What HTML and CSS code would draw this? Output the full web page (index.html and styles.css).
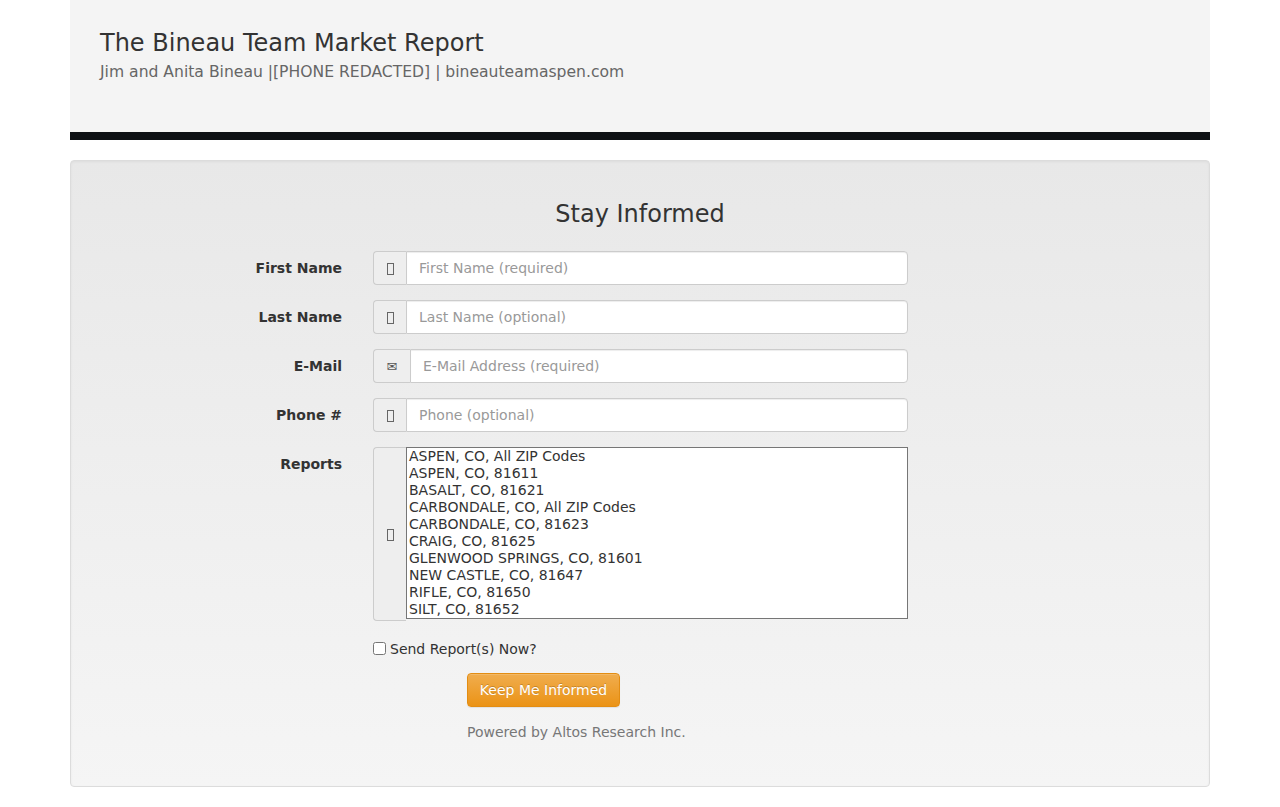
FILE: index.html
```html
<!DOCTYPE html>
<html>
<head>
<meta charset="utf-8">
<title>The Bineau Team Market Report</title>
<link rel="stylesheet" href="styles.css">
</head>
<body>
<div class="container">
  <header class="masthead">
    <h1 class="title">The Bineau Team Market Report</h1>
    <p class="subtitle">Jim and Anita Bineau |[PHONE REDACTED] | bineauteamaspen.com</p>
  </header>
  <div class="bar"></div>
  <div class="well">
    <h3 class="well-title">Stay Informed</h3>
    <form class="form">
      <div class="row">
        <label class="label">First Name</label>
        <div class="group">
          <span class="addon"><span class="tofu"></span></span>
          <input class="input" type="text" placeholder="First Name (required)">
        </div>
      </div>
      <div class="row">
        <label class="label">Last Name</label>
        <div class="group">
          <span class="addon"><span class="tofu"></span></span>
          <input class="input" type="text" placeholder="Last Name (optional)">
        </div>
      </div>
      <div class="row">
        <label class="label">E-Mail</label>
        <div class="group">
          <span class="addon addon-mail">✉</span>
          <input class="input" type="text" placeholder="E-Mail Address (required)">
        </div>
      </div>
      <div class="row">
        <label class="label">Phone #</label>
        <div class="group">
          <span class="addon"><span class="tofu"></span></span>
          <input class="input" type="text" placeholder="Phone (optional)">
        </div>
      </div>
      <div class="row row-top">
        <label class="label">Reports</label>
        <div class="group group-select">
          <span class="addon addon-tall"><span class="tofu"></span></span>
          <select class="select" multiple size="10">
            <option>ASPEN, CO, All ZIP Codes</option>
            <option>ASPEN, CO, 81611</option>
            <option>BASALT, CO, 81621</option>
            <option>CARBONDALE, CO, All ZIP Codes</option>
            <option>CARBONDALE, CO, 81623</option>
            <option>CRAIG, CO, 81625</option>
            <option>GLENWOOD SPRINGS, CO, 81601</option>
            <option>NEW CASTLE, CO, 81647</option>
            <option>RIFLE, CO, 81650</option>
            <option>SILT, CO, 81652</option>
          </select>
        </div>
      </div>
      <div class="check-row">
        <label class="check"><input type="checkbox" class="checkbox"> Send Report(s) Now?</label>
      </div>
      <div class="submit-row">
        <button type="button" class="btn">Keep Me Informed</button>
        <p class="powered">Powered by Altos Research Inc.</p>
      </div>
    </form>
  </div>
</div>
</body>
</html>
```

FILE: styles.css
```css
* { box-sizing: border-box; }
html, body { margin: 0; padding: 0; background: #fff; }
body {
  font-family: "DejaVu Sans", "Liberation Sans", sans-serif;
  font-size: 14px;
  line-height: 1.42857;
  color: #333;
}
.container {
  width: 1140px;
  margin: 0 auto;
}
.masthead {
  background: #f4f4f4;
  height: 132px;
  padding: 27px 30px 0 30px;
}
.title {
  margin: 0;
  font-size: 24px;
  font-weight: normal;
  line-height: 32px;
  color: #333;
}
.subtitle {
  margin: 1px 0 0 0;
  font-size: 15.6px;
  line-height: 25px;
  color: #666;
}
.bar {
  height: 8px;
  background: #0e1114;
}
.well {
  margin-top: 20px;
  border: 1px solid #dcdcdc;
  border-radius: 4px;
  background: linear-gradient(to bottom, #e8e8e8 0%, #f5f5f5 100%);
  box-shadow: inset 0 1px 3px rgba(0,0,0,.05), 0 1px 0 rgba(255,255,255,.1);
  padding: 19px 4px 44px 4px;
  height: 627px;
}
.well-title {
  margin: 21px 0 24px 0;
  text-align: center;
  font-size: 24px;
  font-weight: normal;
  line-height: 26px;
  color: #333;
}
.form { display: flex; flex-direction: column; }
.row {
  display: flex;
  align-items: center;
  margin-bottom: 15px;
}
.row-top { align-items: flex-start; }
.label {
  width: 283px;
  padding-right: 16px;
  text-align: right;
  font-weight: bold;
  line-height: 34px;
  color: #333;
}
.group {
  display: flex;
  margin-left: 15px;
  width: 535px;
  height: 34px;
}
.group-select { height: 174px; align-items: stretch; }
.addon {
  display: flex;
  align-items: center;
  justify-content: center;
  width: 33px;
  flex: none;
  background: #eee;
  border: 1px solid #ccc;
  border-right: 0;
  border-radius: 4px 0 0 4px;
  color: #555;
  font-size: 12px;
}
.addon-mail { width: 37px; font-size: 13px; padding-top: 2px; }
.tofu {
  display: inline-block;
  width: 7px;
  height: 12px;
  border: 1px solid #666;
  margin-top: 2px;
}
.input {
  flex: 1;
  min-width: 0;
  height: 34px;
  padding: 6px 12px;
  border: 1px solid #ccc;
  border-radius: 0 4px 4px 0;
  background: #fff;
  font-family: inherit;
  font-size: 14px;
  color: #555;
  box-shadow: inset 0 1px 1px rgba(0,0,0,.075);
  outline: none;
}
.input::placeholder { color: #999; }
.select {
  flex: 1;
  height: 172px;
  margin: 0;
  padding: 0 1px;
  border: 1px solid #767676;
  border-radius: 0;
  background: #fff;
  font-family: inherit;
  font-size: 14px;
  line-height: 17px;
  color: #333;
  overflow: hidden;
  outline: none;
}
.select option { padding: 0 1px; line-height: 17px; min-height: 17px; }
.check-row {
  margin: 4px 0 0 298px;
  height: 20px;
}
.check {
  display: flex;
  align-items: center;
  gap: 4px;
  font-size: 14px;
  color: #333;
}
.checkbox {
  margin: 0 0 2px 0;
  width: 13px;
  height: 13px;
}
.submit-row {
  margin: 13px 0 0 392px;
}
.btn {
  display: block;
  width: 153px;
  height: 34px;
  padding: 6px 8px;
  white-space: nowrap;
  border: 1px solid #e38d13;
  border-radius: 4px;
  background: linear-gradient(to bottom, #f0ad4e 0%, #eb9316 100%);
  color: #fff;
  font-family: inherit;
  font-size: 14px;
  line-height: 20px;
  text-align: center;
  box-shadow: inset 0 1px 0 rgba(255,255,255,.15), 0 1px 1px rgba(0,0,0,.075);
  text-shadow: 0 -1px 0 rgba(0,0,0,.2);
}
.powered {
  margin: 15px 0 0 0;
  color: #777;
  font-size: 14px;
  line-height: 20px;
}
```
